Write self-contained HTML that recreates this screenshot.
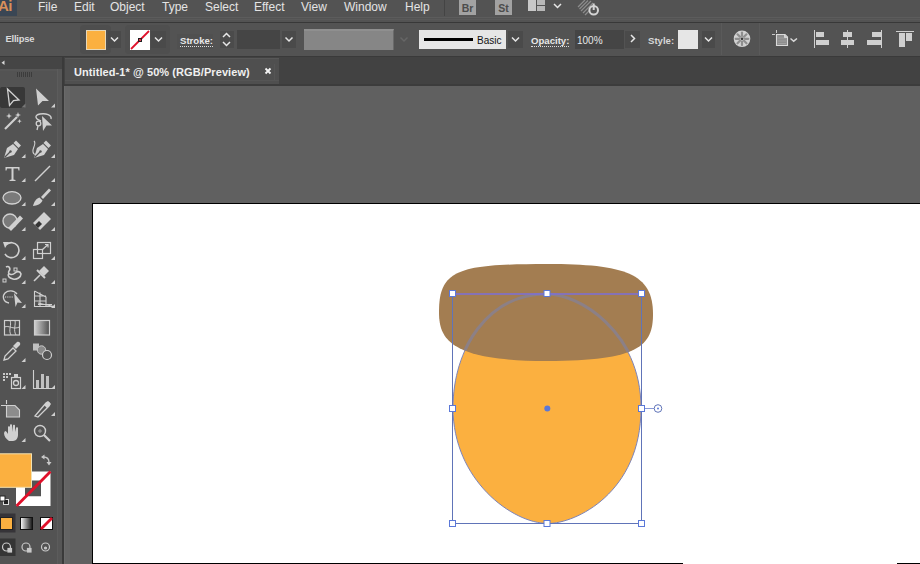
<!DOCTYPE html>
<html><head><meta charset="utf-8">
<style>
*{margin:0;padding:0;box-sizing:border-box}
html,body{width:920px;height:564px;overflow:hidden;background:#535353;font-family:"Liberation Sans",sans-serif;position:relative}
.a{position:absolute}
.mi{position:absolute;top:0;color:#e4e4e4;font-size:12px;line-height:14px}
.lbl{position:absolute;color:#e0e0e0;font-size:10px;line-height:12px}
svg{position:absolute;left:0;top:0}
</style></head><body>
<!-- menu bar -->
<div class="a" style="left:0;top:17px;width:920px;height:1px;background:#5c5c5c"></div>
<div class="a" style="left:0;top:19px;width:920px;height:1px;background:#595959"></div>
<div class="a" style="left:0;top:22px;width:920px;height:1px;background:#383838"></div>
<div class="a" style="left:0;top:0;width:17px;height:16px;background:#3a4654"></div>
<div class="a" style="left:-2px;top:-2px;color:#d8905a;font-size:15px;font-weight:bold;line-height:16px;letter-spacing:-0.5px">Ai</div>
<div class="mi" style="left:38px">File</div>
<div class="mi" style="left:74px">Edit</div>
<div class="mi" style="left:110px">Object</div>
<div class="mi" style="left:162px">Type</div>
<div class="mi" style="left:205px">Select</div>
<div class="mi" style="left:254px">Effect</div>
<div class="mi" style="left:301px">View</div>
<div class="mi" style="left:344px">Window</div>
<div class="mi" style="left:405px">Help</div>
<div class="a" style="left:444px;top:0;width:1px;height:16px;background:#444"></div>
<div class="a" style="left:459px;top:0;width:17px;height:15px;background:#a2a2a2;color:#4c4c4c;font-size:10.5px;font-weight:bold;line-height:16px;text-align:center">Br</div>
<div class="a" style="left:495px;top:0;width:17px;height:15px;background:#a2a2a2;color:#4c4c4c;font-size:10.5px;font-weight:bold;line-height:16px;text-align:center">St</div>

<!-- control bar -->
<div class="a" style="left:0;top:56px;width:920px;height:1px;background:#3a3a3a"></div>
<div class="a" style="left:721px;top:23px;width:1px;height:32px;background:#5a5a5a"></div>
<div class="a" style="left:759px;top:23px;width:1px;height:32px;background:#5a5a5a"></div>
<div class="lbl" style="left:5.5px;top:32.5px;font-weight:bold;font-size:9.4px;color:#dadada;letter-spacing:-0.2px">Ellipse</div>
<div class="a" style="left:80px;top:25px;width:31px;height:29px;background:#4e4e4e;border-radius:4px"></div>
<div class="a" style="left:125px;top:25px;width:45px;height:29px;background:#4f4f4f;border-radius:4px"></div>
<div class="a" style="left:220px;top:31px;width:14px;height:17px;background:#4b4b4b"></div>
<div class="a" style="left:177px;top:34px;width:36px;height:15px;background:#505050"></div>
<div class="a" style="left:86px;top:30px;width:20px;height:20px;background:#fbb040;border:1px solid #e8d8b8"></div>
<div class="a" style="left:108px;top:31px;width:13px;height:17px;background:#4a4a4a"></div>
<div class="a" style="left:130px;top:30px;width:20px;height:20px;background:#fff"></div>
<div class="a" style="left:151px;top:31px;width:15px;height:17px;background:#4a4a4a"></div>
<div class="lbl" style="left:180px;top:35px;font-weight:bold;color:#e8e8e8;border-bottom:1px dotted #ddd;line-height:11px;font-size:9.6px">Stroke:</div>
<div class="a" style="left:237px;top:30px;width:43px;height:19px;background:#454545"></div>
<div class="a" style="left:282px;top:31px;width:14px;height:17px;background:#4a4a4a"></div>
<div class="a" style="left:304px;top:29px;width:90px;height:21px;background:#868686;border-top:2px solid #8f8f8f;border-right:1px solid #6a6a6a"></div>
<div class="a" style="left:419px;top:30px;width:87px;height:19px;background:#e6e6e6"></div>
<div class="a" style="left:424px;top:38px;width:49px;height:3px;background:#000"></div>
<div class="a" style="left:477px;top:35px;color:#111;font-size:10px;line-height:12px">Basic</div>
<div class="a" style="left:508px;top:31px;width:15px;height:17px;background:#4a4a4a"></div>
<div class="lbl" style="left:531px;top:35px;font-weight:bold;color:#e8e8e8;border-bottom:1px dotted #ddd;line-height:11px;font-size:9.6px">Opacity:</div>
<div class="a" style="left:575px;top:30px;width:49px;height:19px;background:#454545"></div>
<div class="lbl" style="left:577px;top:35px;color:#e8e8e8">100%</div>
<div class="a" style="left:625px;top:31px;width:15px;height:17px;background:#4a4a4a"></div>
<div class="lbl" style="left:648px;top:35px;font-weight:bold;color:#d8d8d8;font-size:9.6px">Style:</div>
<div class="a" style="left:678px;top:30px;width:20px;height:19px;background:#e6e6e6"></div>
<div class="a" style="left:702px;top:31px;width:13px;height:17px;background:#4a4a4a"></div>

<!-- tab bar -->
<div class="a" style="left:63px;top:57px;width:857px;height:29px;background:#424242"></div>
<div class="a" style="left:65px;top:58px;width:214px;height:26px;background:#4f4f4f;border-top:1px solid #575757"></div>
<div class="a" style="left:65px;top:80px;width:214px;height:1px;background:#555"></div>
<div class="a" style="left:274px;top:64px;width:1px;height:16px;background:#555"></div>
<div class="a" style="left:63px;top:84px;width:857px;height:2px;background:#3c3c3c"></div>
<div class="a" style="left:74px;top:65.5px;color:#f0f0f0;font-size:11px;font-weight:bold;line-height:13px;letter-spacing:0.08px">Untitled-1* @ 50% (RGB/Preview)</div>
<svg width="920" height="100" style="left:0;top:0"><path d="M265.5,68.5 L270.5,73.5 M270.5,68.5 L265.5,73.5" stroke="#f4f4f4" stroke-width="1.8"/></svg>

<!-- canvas -->
<div class="a" style="left:63px;top:86px;width:857px;height:478px;background:#606060"></div>
<div class="a" style="left:92px;top:203px;width:828px;height:361px;background:#000"></div>
<div class="a" style="left:93px;top:204px;width:827px;height:359px;background:#fff"></div>
<div class="a" style="left:683px;top:563px;width:214px;height:1px;background:#fff"></div>

<!-- toolbar -->
<div class="a" style="left:0;top:57px;width:57px;height:507px;background:#535353"></div>
<div class="a" style="left:57px;top:57px;width:5px;height:507px;background:#565656;border-left:1px solid #5c5c5c"></div>
<div class="a" style="left:0;top:57px;width:62px;height:12px;background:#454545"></div>
<div class="a" style="left:62px;top:57px;width:2px;height:507px;background:#3a3a3a"></div>
<div class="a" style="left:64px;top:86px;width:1px;height:478px;background:#6a6a6a"></div>
<div class="a" style="left:65px;top:86px;width:5px;height:478px;background:#646464"></div>
<div class="a" style="left:0;top:87px;width:25px;height:21px;background:#383838;border-radius:2px"></div>

<svg width="920" height="564">
 <g fill="none" stroke="#e6e6e6" stroke-width="1.5">
  <!-- chevrons control bar -->
  <path d="M111,37.5 L114.5,41 L118,37.5"/>
  <path d="M155,37.5 L158.5,41 L162,37.5"/>
  <path d="M285.5,37.5 L289,41 L292.5,37.5"/>
  <path d="M512,37.5 L515.5,41 L519,37.5"/>
  <path d="M705,37.5 L708.5,41 L712,37.5"/>
  <path d="M631,35 L634.5,38.5 L631,42"/>
  <path d="M223,37 L226.5,33.5 L230,37"/>
  <path d="M223,42 L226.5,45.5 L230,42"/>
  <path d="M554,4 L557.5,7.5 L561,4"/>
  <path d="M400.5,37.5 L404,41 L407.5,37.5" stroke="#666"/>
 </g>
 <!-- stroke swatch slash -->
 <line x1="131" y1="49" x2="149" y2="31" stroke="#e0102a" stroke-width="1.8"/>
 <rect x="138.5" y="38.5" width="3" height="3" fill="none" stroke="#222" stroke-width="1"/>
 <!-- layout icon menu -->
 <rect x="528" y="0" width="8" height="11" fill="#c8c8c8"/>
 <rect x="537" y="0" width="8" height="5" fill="#b8b8b8"/>
 <rect x="537" y="6" width="8" height="5" fill="#b8b8b8"/>
 <!-- sync icon -->
 <g stroke="#8c8c8c" stroke-width="1.3">
  <line x1="578" y1="7" x2="585" y2="0"/><line x1="579.5" y1="9" x2="588" y2="0.5"/><line x1="581" y1="11" x2="591" y2="1"/><line x1="583" y1="13" x2="593" y2="3"/><line x1="585" y1="15" x2="590" y2="10"/>
 </g>
 <circle cx="593.7" cy="10.2" r="4.3" fill="#535353" stroke="#d4d4d4" stroke-width="2"/>
 <line x1="593.7" y1="3.5" x2="593.7" y2="10" stroke="#d4d4d4" stroke-width="2"/>
 <!-- wheel icon -->
 <circle cx="742" cy="38.8" r="8.3" fill="#d2d2d2"/>
 <g stroke="#8e8e8e" stroke-width="2.2" stroke-linecap="round">
  <line x1="742" y1="36" x2="742" y2="32.5"/><line x1="742" y1="41.6" x2="742" y2="45.1"/>
  <line x1="739.2" y1="38.8" x2="735.7" y2="38.8"/><line x1="744.8" y1="38.8" x2="748.3" y2="38.8"/>
  <line x1="740" y1="36.8" x2="737.5" y2="34.3"/><line x1="744" y1="40.8" x2="746.5" y2="43.3"/>
  <line x1="744" y1="36.8" x2="746.5" y2="34.3"/><line x1="740" y1="40.8" x2="737.5" y2="43.3"/>
 </g>
 <circle cx="742" cy="38.8" r="1.4" fill="#3a3a3a"/>
 <!-- artboard icon -->
 <path d="M776.5,34.5 H785 L787.5,37 V45.5 H776.5 Z" fill="#8e8e8e" stroke="#dadada" stroke-width="1.1"/>
 <path d="M778,38 H786 M778,41 H786 M778,43.5 H786" stroke="#a8a8a8" stroke-width="0.7"/>
 <path d="M784.5,34.5 V37.5 H787.5" fill="#cfcfcf" stroke="#dadada" stroke-width="0.8"/>
 <g stroke="#c8c8c8" stroke-width="1" fill="none">
  <path d="M776.5,30 V33 M772,34.5 H775"/>
  <path d="M790.5,38.5 L793.7,41.2 L797,38.5" stroke="#d8d8d8" stroke-width="1.5"/>
 </g>
 <!-- align icons -->
 <g fill="#cfcfcf">
  <rect x="814" y="30" width="1" height="18"/>
  <rect x="816" y="32" width="8" height="5"/>
  <rect x="816" y="40" width="13" height="5"/>
  <rect x="847" y="30" width="1" height="18"/>
  <rect x="843" y="32" width="9" height="5"/>
  <rect x="841" y="40" width="13" height="5"/>
  <rect x="881" y="30" width="1" height="18"/>
  <rect x="872" y="32" width="9" height="5"/>
  <rect x="867" y="40" width="14" height="5"/>
  <rect x="896" y="31" width="18" height="1"/>
  <rect x="899" y="33" width="6" height="14"/>
  <rect x="906" y="33" width="6" height="8"/>
 </g>
 <!-- toolbar small arrow -->
 <path d="M4.5,60.5 L1.5,62.8 L4.5,65 Z" fill="#d8d8d8"/>
 <g fill="#3c3c3c"><rect x="17" y="72" width="1" height="5"/><rect x="19" y="72" width="1" height="5"/><rect x="21" y="72" width="1" height="5"/><rect x="23" y="72" width="1" height="5"/><rect x="25" y="72" width="1" height="5"/><rect x="27" y="72" width="1" height="5"/><rect x="29" y="72" width="1" height="5"/><rect x="31" y="72" width="1" height="5"/></g>
 <rect x="0" y="69.5" width="57" height="1" fill="#5a5a5a"/>

 <!-- canvas objects -->
 <defs>
  <path id="egg" d="M547,294 C578.5,294 641,331 641,408 C641,492.9 575.6,523.5 548,523.5 C512.4,523.5 453,480.1 453,408 C453,348.7 487.6,294 547,294 Z"/>
  <path id="cap" d="M439,312 C439,270 457.8,264 547,264 C625.4,264 653,273.5 653,314 C653,345.4 639.4,361 547,361 C449,361 439,338.4 439,312 Z"/>
  <clipPath id="capclip"><use href="#cap"/></clipPath>
 </defs>
 <use href="#egg" fill="#fbb040" stroke="#7d84b8" stroke-width="1"/>
 <use href="#cap" fill="#a37d51"/>
 <use href="#egg" fill="none" stroke="#8c8086" stroke-width="3" clip-path="url(#capclip)"/>
 <g fill="none" stroke="#6074b8" stroke-width="1">
  <path d="M452.5,293.5 V523.5 H641.5 V293.5"/>
  <line x1="641.5" y1="408.5" x2="654" y2="408.5" stroke="#8a9ad8"/>
  <circle cx="658" cy="408.5" r="3.8"/>
 </g>
 <line x1="452" y1="294" x2="642" y2="294" stroke="#7b6fd8" stroke-width="1.6"/>
 <circle cx="658" cy="408.5" r="1" fill="#5b78d8"/>
 <circle cx="547.3" cy="408.4" r="3" fill="#5b78d8"/>
 <g fill="#fff" stroke="#5b78d8" stroke-width="1">
  <rect x="449.5" y="290.5" width="6" height="6"/>
  <rect x="544" y="290.5" width="6" height="6"/>
  <rect x="638.5" y="290.5" width="6" height="6"/>
  <rect x="449.5" y="405.5" width="6" height="6"/>
  <rect x="638.5" y="405.5" width="6" height="6"/>
  <rect x="449.5" y="520.5" width="6" height="6"/>
  <rect x="544" y="520.5" width="6" height="6"/>
  <rect x="638.5" y="520.5" width="6" height="6"/>
 </g>
</svg>

<svg width="64" height="564" style="left:0;top:0">
 <g fill="#cfcfcf">
  <!-- tiny corner triangles -->
  <path d="M25.5,103.5 V107.5 H21.5 Z" fill="#777"/>
  <path d="M55,103.5 V107.5 H51 Z"/>
  <path d="M25.5,154 V158 H21.5 Z"/><path d="M55,154 V158 H51 Z"/>
  <path d="M25.5,178 V182 H21.5 Z"/><path d="M55,178 V182 H51 Z"/>
  <path d="M25.5,202 V206 H21.5 Z"/><path d="M55,202 V206 H51 Z"/>
  <path d="M25.5,227 V231 H21.5 Z"/><path d="M55,227 V231 H51 Z"/>
  <path d="M25.5,256 V260 H21.5 Z"/><path d="M55,256 V260 H51 Z"/>
  <path d="M25.5,280 V284 H21.5 Z"/><path d="M55,280 V284 H51 Z"/>
  <path d="M25.5,304 V308 H21.5 Z"/><path d="M55,304 V308 H51 Z"/>
  <path d="M25.5,358 V362 H21.5 Z"/>
  <path d="M25.5,385 V389 H21.5 Z"/><path d="M55,385 V389 H51 Z"/>
  <path d="M55,412 V416 H51 Z"/>
  <path d="M25.5,438 V442 H21.5 Z"/>
 </g>
 <g fill="none" stroke="#d2d2d2" stroke-width="1.3" stroke-linejoin="miter">
  <!-- selection outline arrow -->
  <path d="M7.5,89 L19,100 L13.5,100.5 L9.5,105.5 Z"/>
 </g>
 <g fill="#cfcfcf">
  <!-- direct selection solid -->
  <path d="M36,88.5 L49,101 L42.5,101 L38,105.5 Z"/>
 </g>
 <!-- magic wand -->
 <line x1="5" y1="129" x2="17" y2="117" stroke="#d0d0d0" stroke-width="2.2"/>
 <g fill="#d0d0d0">
  <path d="M9,113 L9.8,115.2 L12,116 L9.8,116.8 L9,119 L8.2,116.8 L6,116 L8.2,115.2Z"/>
  <path d="M18,112 L18.8,114.2 L21,115 L18.8,115.8 L18,118 L17.2,115.8 L15,115 L17.2,114.2Z"/>
  <path d="M19.5,119 L20.1,120.6 L21.7,121.2 L20.1,121.8 L19.5,123.4 L18.9,121.8 L17.3,121.2 L18.9,120.6Z"/>
 </g>
 <!-- lasso -->
 <path d="M41,121 C35,119 34,115 40,114 C46,113 52,115 51,119" fill="none" stroke="#d0d0d0" stroke-width="1.4"/>
 <circle cx="38.5" cy="123.5" r="2.3" fill="none" stroke="#d0d0d0" stroke-width="1.3"/>
 <path d="M38,126 L37,130" stroke="#d0d0d0" stroke-width="1.3"/>
 <path d="M42,116 L52,125.5 L46.5,125.5 L43,131 Z" fill="#cfcfcf"/>
 <!-- pen -->
 <g fill="#d0d0d0">
  <path d="M4,158 L7,148 L13,144 L18,149 L14,155 Z"/>
  <path d="M13.5,143 L16,140.5 L21,145.5 L18.5,148 Z"/>
 </g>
 <path d="M4.5,157.5 L10,152" stroke="#535353" stroke-width="1.2"/>
 <circle cx="10.5" cy="151.5" r="1.2" fill="#535353"/>
 <g fill="#d0d0d0">
  <path d="M34,158 L37,148 L43,144 L48,149 L44,155 Z"/>
  <path d="M43.5,143 L46,140.5 L51,145.5 L48.5,148 Z"/>
 </g>
 <path d="M34.5,157.5 L40,152" stroke="#535353" stroke-width="1.2"/>
 <circle cx="40.5" cy="151.5" r="1.2" fill="#535353"/>
 <path d="M34,141 C37,144 32,148 33,152 C33.5,154 35,155 36,154" fill="none" stroke="#d0d0d0" stroke-width="1.1"/>
 <!-- type T -->
 <path d="M5.5,167 H19.5 V170.5 H18.5 L18,168.5 H13.5 V179.5 L15.5,180 V181 H9.5 V180 L11.5,179.5 V168.5 H7 L6.5,170.5 H5.5 Z" fill="#d0d0d0"/>
 <!-- line -->
 <line x1="35" y1="181" x2="50" y2="166" stroke="#d0d0d0" stroke-width="1.5"/>
 <!-- ellipse -->
 <ellipse cx="12" cy="197.8" rx="9" ry="6.2" fill="#7a7a7a" stroke="#d4d4d4" stroke-width="1.3"/>
 <!-- paintbrush -->
 <path d="M41,197 L49,188.5 L51,190.5 L43,199 Z" fill="#d0d0d0"/>
 <path d="M33,206 C34,202 36,198.5 39.5,197.5 L42.5,200.5 C41,204 37,205.5 33,206 Z" fill="#d0d0d0"/>
 <!-- blob brush -->
 <circle cx="10" cy="221" r="7" fill="#7a7a7a" stroke="#d0d0d0" stroke-width="1.4"/>
 <path d="M8,228 L20,215.5 L23,218.5 L11,231 Z" fill="#d0d0d0"/>
 <!-- eraser -->
 <path d="M33,223 L44,212 L51,219 L40,230 Z" fill="#d0d0d0"/>
 <path d="M35,225 L39,221 L42,224 L38,228 Z" fill="#353535"/>
 <!-- rotate -->
 <path d="M6.5,244.5 A7.5,7.5 0 1 1 5,254" fill="none" stroke="#d0d0d0" stroke-width="1.6"/>
 <path d="M3,242 L9,242 L5,248 Z" fill="#d0d0d0"/>
 <!-- scale -->
 <rect x="37.5" y="242.5" width="13" height="11" fill="none" stroke="#d0d0d0" stroke-width="1.2"/>
 <rect x="33.5" y="249.5" width="9" height="9" fill="none" stroke="#d0d0d0" stroke-width="1.2"/>
 <path d="M42,250 L48,244.5 M45,244.5 H48 V247.5" fill="none" stroke="#d0d0d0" stroke-width="1.2"/>
 <!-- warp/puppet -->
 <path d="M6,267 C9,265 11,269 9,271 C7,274 12,276 15,273 C17,271 20,271 21,274 C21,277 17,280 13,279 C9,278 7,276 9,273" fill="none" stroke="#d0d0d0" stroke-width="1.6"/>
 <rect x="3" y="279" width="3" height="3" fill="none" stroke="#d0d0d0" stroke-width="1"/>
 <rect x="14" y="268" width="3" height="3" fill="none" stroke="#d0d0d0" stroke-width="1"/>
 <!-- pin -->
 <path d="M39,271 L44,266 L49,271 L44,276 Z" fill="#d0d0d0"/>
 <path d="M37,270 L45,278" stroke="#d0d0d0" stroke-width="2"/>
 <path d="M40,275 L34,281" stroke="#d0d0d0" stroke-width="1.6"/>
 <!-- shape builder -->
 <path d="M9,303 C3,302 2,296 5,293 C8,290 14,290 17,294" fill="none" stroke="#d0d0d0" stroke-width="1.3"/>
 <path d="M5,297 H13" stroke="#d0d0d0" stroke-width="1.2" stroke-dasharray="1.2 1"/>
 <path d="M14,293 L22,303 L17.5,302.5 L15.5,307 Z" fill="#d0d0d0"/>
 <!-- perspective grid -->
 <path d="M34.5,291 V306.5 H54 M34.5,291 L46,297 V306 M34.5,296 H46 M34.5,301 H46 M40,292.5 V306" fill="none" stroke="#d0d0d0" stroke-width="1.1"/>
 <path d="M38,303 L54,306.5 M38,304.5 H52" fill="none" stroke="#d0d0d0" stroke-width="1"/>
 <!-- mesh -->
 <rect x="4.5" y="320.5" width="15" height="14.5" fill="none" stroke="#d0d0d0" stroke-width="1.2"/>
 <path d="M4.5,327 C9,325 13,330 19.5,327 M10,320.5 C12,325 8,330 11,335 M15,320.5 C16,325 13,330 16,335" fill="none" stroke="#d0d0d0" stroke-width="1"/>
 <!-- gradient -->
 <defs><linearGradient id="gr" x1="0" x2="1"><stop offset="0" stop-color="#d0d0d0"/><stop offset="1" stop-color="#505050"/></linearGradient></defs>
 <rect x="34.5" y="320.5" width="15" height="14.5" fill="url(#gr)" stroke="#d0d0d0" stroke-width="1.2"/>
 <!-- eyedropper -->
 <path d="M4,360 L5,356 L13,348 L16,351 L8,359 Z" fill="none" stroke="#d0d0d0" stroke-width="1.3"/>
 <path d="M13,346 L17,342 C19,341 21,343 20,345 L16,349 Z" fill="#d0d0d0"/>
 <!-- blend -->
 <rect x="33" y="343.5" width="6" height="7" fill="#c0c0c0"/>
 <circle cx="41.5" cy="350" r="4.2" fill="#8a8a8a" stroke="#c8c8c8" stroke-width="1"/>
 <circle cx="47" cy="355" r="4.5" fill="#535353" stroke="#d0d0d0" stroke-width="1.2"/>
 <!-- symbol sprayer -->
 <g fill="#c8c8c8"><rect x="3" y="373" width="2" height="2"/><rect x="6" y="373" width="2" height="2"/><rect x="9" y="373" width="2" height="2"/><rect x="3" y="376" width="2" height="2"/><rect x="6" y="376" width="2" height="2"/><rect x="3" y="379" width="2" height="2"/></g>
 <rect x="11.5" y="377.5" width="9" height="11" fill="none" stroke="#d0d0d0" stroke-width="1.2"/>
 <rect x="14" y="374" width="4" height="3" fill="#d0d0d0"/>
 <circle cx="16" cy="383" r="2.5" fill="none" stroke="#d0d0d0" stroke-width="1.3"/>
 <!-- graph -->
 <path d="M33.5,370 V388.5 H52" fill="none" stroke="#d0d0d0" stroke-width="1.1"/>
 <rect x="36" y="380" width="3" height="8" fill="#c0c0c0"/>
 <rect x="41" y="374" width="3" height="14" fill="#c0c0c0"/>
 <rect x="46" y="376" width="3" height="12" fill="#c0c0c0"/>
 <!-- artboard -->
 <path d="M6.5,400 V404 M1,405.5 H6" stroke="#d0d0d0" stroke-width="1.1"/>
 <path d="M6.5,405.5 H15 L19.5,410 V417 H6.5 Z" fill="#8c8c8c" stroke="#d0d0d0" stroke-width="1.1"/>
 <!-- slice / knife -->
 <path d="M35,416 L46,403 C48,401 51,403 49,406 L38,417 Z" fill="none" stroke="#d0d0d0" stroke-width="1.3"/>
 <path d="M44,405 L48,401 L51,404 L47,408Z" fill="#d0d0d0"/>
 <!-- hand -->
 <path d="M9,441 C6,439 4,436 4,433 L5,431 C6,431 7,432 8,434 L8,427 C8,426 10,426 10,427 L10,432 L10,425 C10,424 12,424 12,425 L12,432 L13,425.5 C13,424.5 15,424.5 15,425.5 L15,432 L16,428 C16,427 18,427 18,428 L18,435 C18,438 16,441 13,441 Z" fill="#d0d0d0"/>
 <!-- zoom -->
 <circle cx="40" cy="431" r="5.5" fill="none" stroke="#d0d0d0" stroke-width="1.4"/>
 <path d="M44,435 L50,441" stroke="#d0d0d0" stroke-width="2.2"/>
 <path d="M38,431 H42 M40,429 V433" stroke="#999" stroke-width="1"/>
</svg>

<svg width="64" height="564" style="left:0;top:0">
 <defs><linearGradient id="gr2" x1="0" x2="1"><stop offset="0" stop-color="#fff"/><stop offset="1" stop-color="#111"/></linearGradient></defs>
 <!-- stroke swatch frame -->
 <path d="M16,471.5 H50.5 V506 H16 Z M25,480.5 V496.3 H41 V480.5 Z" fill="#fff" fill-rule="evenodd"/>
 <line x1="16.5" y1="506" x2="50.5" y2="471.5" stroke="#e0102a" stroke-width="2.8"/>
 <!-- fill swatch -->
 <rect x="-1" y="453.8" width="32.5" height="33.5" fill="#fbb040" stroke="#f3e2b0" stroke-width="1"/>
 <!-- swap arrow -->
 <path d="M43.5,457 C47,457 49,459 49,462.5" fill="none" stroke="#c8c8c8" stroke-width="1.3"/>
 <path d="M41,457 L44.5,454.5 V459.5 Z M49,465.5 L46.5,462 H51.5 Z" fill="#c8c8c8"/>
 <!-- default colors -->
 <rect x="3.5" y="499.5" width="5" height="5" fill="#222" stroke="#ddd" stroke-width="1"/>
 <rect x="0" y="496" width="5" height="5" fill="#fff" stroke="#222" stroke-width="1"/>
 <!-- color mode buttons -->
 <rect x="0" y="513.5" width="15.5" height="19" fill="#363438"/>
 <rect x="0.5" y="517.5" width="12" height="12" fill="#fbb040" stroke="#222" stroke-width="1"/>
 <rect x="20.5" y="517.5" width="12" height="12" fill="url(#gr2)" stroke="#111" stroke-width="1"/>
 <rect x="40.5" y="517.5" width="12" height="12" fill="#fff" stroke="#111" stroke-width="1"/>
 <line x1="41" y1="529" x2="52" y2="518" stroke="#e0102a" stroke-width="2.8"/>
 <!-- draw modes -->
 <rect x="0" y="538.5" width="15.5" height="17.5" fill="#353535"/>
 <g fill="none" stroke="#c8c8c8" stroke-width="1.2">
  <circle cx="6.5" cy="547" r="4"/><rect x="8" y="548.5" width="3.5" height="3.5" fill="#c8c8c8"/>
  <circle cx="26" cy="547" r="4"/><rect x="27.5" y="548.5" width="3.5" height="3.5" fill="#c8c8c8"/>
  <circle cx="45.5" cy="547" r="4"/><circle cx="45.5" cy="548" r="1" fill="#c8c8c8"/>
 </g>
</svg>
</body></html>
